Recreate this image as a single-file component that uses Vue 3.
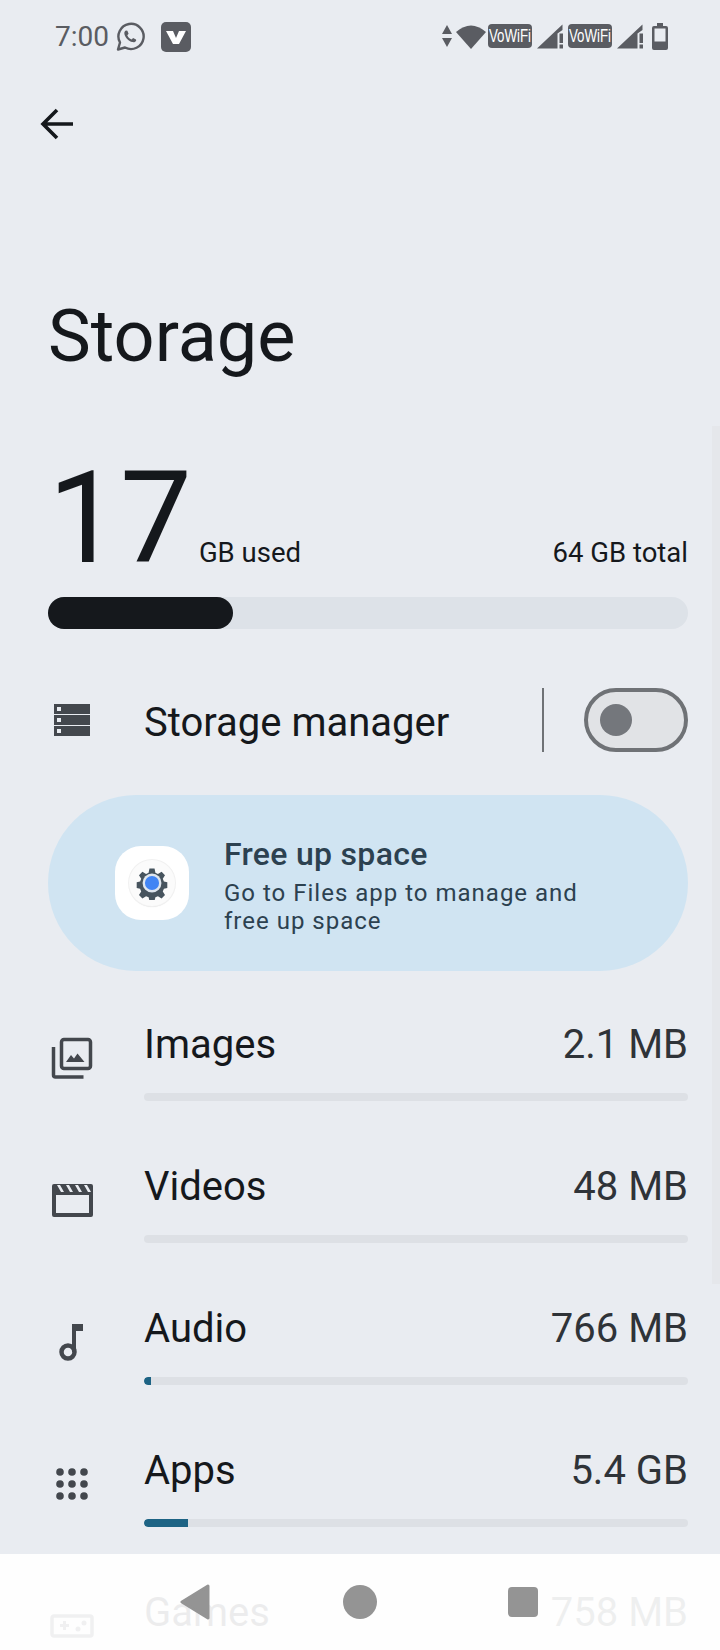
<script setup>
const rows = [
  { name: 'Images', size: '2.1 MB', pct: 0 },
  { name: 'Videos', size: '48 MB', pct: 0 },
  { name: 'Audio', size: '766 MB', pct: 1.2 },
  { name: 'Apps', size: '5.4 GB', pct: 8 },
  { name: 'Games', size: '758 MB', pct: 0 }
]
</script>

<template>
  <div class="phone">
    <div class="status">
      <div class="status-left">
        <span class="time">7:00</span>
        <svg class="wa" width="30" height="30" viewBox="0 0 30 30">
          <path d="M3 27.5l2-7A12.6 12.6 0 1 1 10 25.5z" fill="none" stroke="#5a5c62" stroke-width="2.4" stroke-linejoin="round"/>
          <path d="M11 8.6c-1.4.6-2 2-1.5 3.8 1 3.400 4.300 6.700 7.800 7.700 1.900.5 3.300-.2 3.900-1.700l-.2-1-2.900-1.400-1.500 1.500c-1.900-.7-3.500-2.300-4.300-4.300l1.300-1.400-1.200-3z" fill="#5a5c62"/>
        </svg>
        <svg class="vv" width="30" height="30" viewBox="0 0 30 30">
          <rect width="30" height="30" rx="5" fill="#5a5c62"/>
          <path d="M5 9h7l3 7 3-7h7l-7 13h-6z" fill="#fff"/>
        </svg>
      </div>
      <div class="status-right">
        <svg class="arrows" width="10" height="22" viewBox="0 0 10 22">
          <path d="M5 0l5 9H0zM5 22L0 13h10z" fill="#5a5c62"/>
        </svg>
        <svg class="wifi" width="30" height="25" viewBox="0 0 30 25">
          <path d="M0 8Q15-5 30 8L15 25z" fill="#5a5c62"/>
        </svg>
        <span class="vowifi"><span class="vowifi-text">VoWiFi</span></span>
        <svg class="signal" width="26" height="25" viewBox="0 0 26 25">
          <path d="M0 24.500L18 7.500v17z" fill="#5a5c62"/>
          <path d="M18 7.500L25.500 .5v5.500l-5 3.500v15h-2.500z" fill="#5a5c62"/>
          <path d="M22.500 9.500h3.500v9.500h-3.500zM22.500 20.500h3.500v4h-3.500z" fill="#5a5c62"/>
        </svg>
        <span class="vowifi"><span class="vowifi-text">VoWiFi</span></span>
        <svg class="signal" width="26" height="25" viewBox="0 0 26 25">
          <path d="M0 24.500L18 7.500v17z" fill="#5a5c62"/>
          <path d="M18 7.500L25.500 .5v5.500l-5 3.500v15h-2.500z" fill="#5a5c62"/>
          <path d="M22.500 9.500h3.500v9.500h-3.500zM22.500 20.500h3.500v4h-3.500z" fill="#5a5c62"/>
        </svg>
        <svg class="batt" width="16" height="27" viewBox="0 0 16 27">
          <path d="M5 0h6v3h3a2 2 0 0 1 2 2v20a2 2 0 0 1-2 2H2a2 2 0 0 1-2-2V5a2 2 0 0 1 2-2h3z" fill="#5a5c62"/>
          <rect x="2.500" y="5.500" width="11" height="13" fill="#e9ecf1"/>
        </svg>
      </div>
    </div>

    <svg class="back" width="34" height="32" viewBox="0 0 34 32">
      <path d="M33 16H3M17 2L3 16l14 14" fill="none" stroke="#15181c" stroke-width="3.600"/>
    </svg>

    <h1 class="title">Storage</h1>

    <div class="used-line">
      <span class="big">17</span>
      <span class="small used-unit">GB used</span>
      <span class="small total">64 GB total</span>
    </div>
    <div class="main-bar"><div class="main-fill"></div></div>

    <div class="manager">
      <svg class="row-icon" width="36" height="32" viewBox="0 0 36 32">
        <path fill-rule="evenodd" d="M0 0h36v10H0zM3 3v4h4V3zM0 11h36v10H0zM3 14v4h4v-4zM0 22h36v10H0zM3 25v4h4v-4z" fill="#43474d"/>
      </svg>
      <span class="manager-label">Storage manager</span>
      <span class="divider"></span>
      <div class="switch"><span class="knob"></span></div>
    </div>

    <div class="card">
      <div class="tile">
        <div class="tile-disc">
          <svg width="34" height="34" viewBox="0 0 36 36">
            <path d="M15 1h6l1 5 3 1.300 4.300-2.600 4 4.200-2.600 4.200 1.300 3 4 1v6.800l-4 1-1.300 3 2.600 4.200-4 4-4.300-2.500-3 1.300-1 4.100h-6l-1-4.100-3-1.300-4.300 2.500-4-4 2.600-4.200-1.300-3-4-1v-6.800l4-1 1.300-3-2.600-4.200 4-4.200L11 7.300l3-1.300z" fill="#47545e" transform="translate(1.800 1.800) scale(.9)"/>
            <circle cx="18" cy="18" r="10" fill="#dfe6ee"/>
            <circle cx="18" cy="18" r="7.500" fill="#4285f4"/>
          </svg>
        </div>
      </div>
      <div class="card-text">
        <div class="card-title">Free up space</div>
        <div class="card-sub">Go to Files app to manage and<br>free up space</div>
      </div>
    </div>

    <div class="list">
      <div v-for="r in rows" :key="r.name" class="row">
        <div class="icon-cell">
          <svg v-if="r.name === 'Images'" width="42" height="42" viewBox="0 0 42 42">
            <rect x="10.500" y="2.500" width="29" height="29" rx="2.500" fill="none" stroke="#43474d" stroke-width="3.500"/>
            <path d="M15 25l5-7 3 3.500 3.500-5 7 8.500z" fill="#43474d"/>
            <path d="M2.500 10v28a2 2 0 0 0 2 2h28" fill="none" stroke="#43474d" stroke-width="3.500"/>
          </svg>
          <svg v-else-if="r.name === 'Videos'" width="41" height="33" viewBox="0 0 41 33">
            <path fill-rule="evenodd" d="M2 0h37a2 2 0 0 1 2 2v29a2 2 0 0 1-2 2H2a2 2 0 0 1-2-2V2a2 2 0 0 1 2-2zM4 11v18h33V11zM5 1l4 7h3L8 1zM14 1l4 7h3l-4-7zM23 1l4 7h3l-4-7zM32 1l4 7h3l-4-7z" fill="#43474d"/>
          </svg>
          <svg v-else-if="r.name === 'Audio'" width="26" height="38" viewBox="0 0 26 38">
            <path d="M13 29V1h11v7h-7v21" fill="#43474d"/>
            <circle cx="9" cy="29" r="6.500" fill="none" stroke="#43474d" stroke-width="4.500"/>
          </svg>
          <svg v-else-if="r.name === 'Apps'" width="32" height="32" viewBox="0 0 32 32">
            <g fill="#43474d">
              <circle cx="4" cy="4" r="3.800"/><circle cx="16" cy="4" r="3.800"/><circle cx="28" cy="4" r="3.800"/>
              <circle cx="4" cy="16" r="3.800"/><circle cx="16" cy="16" r="3.800"/><circle cx="28" cy="16" r="3.800"/>
              <circle cx="4" cy="28" r="3.800"/><circle cx="16" cy="28" r="3.800"/><circle cx="28" cy="28" r="3.800"/>
            </g>
          </svg>
          <svg v-else width="44" height="24" viewBox="0 0 44 24">
            <rect x="2" y="2" width="40" height="20" rx="2" fill="none" stroke="#43474d" stroke-width="3.500"/>
            <path d="M10 10h3V7h3v3h3v3h-3v3h-3v-3h-3z" fill="#43474d"/>
            <circle cx="28" cy="15" r="2.500" fill="#43474d"/>
            <circle cx="34" cy="9" r="2.500" fill="#43474d"/>
          </svg>
        </div>
        <div class="row-body">
          <div class="row-head">
            <span class="row-name">{{ r.name }}</span>
            <span class="row-size">{{ r.size }}</span>
          </div>
          <div class="row-bar">
            <div v-if="r.pct" class="row-fill" :style="{ width: r.pct + '%' }"></div>
          </div>
        </div>
      </div>
    </div>

    <div class="scroll-thumb"></div>

    <div class="nav">
      <svg class="nav-back" width="32" height="36" viewBox="0 0 32 36">
        <path d="M29 2L3 18l26 16z" fill="#949494" stroke="#949494" stroke-width="3" stroke-linejoin="round"/>
      </svg>
      <span class="nav-home"></span>
      <span class="nav-recent"></span>
    </div>
  </div>
</template>

<style scoped>
.phone {
  position: relative;
  width: 720px;
  height: 1650px;
  overflow: hidden;
  background: #e9ecf1;
  font-family: Roboto, "Noto Sans", sans-serif;
  color: #15181c;
}
.status {
  display: flex;
  justify-content: space-between;
  align-items: center;
  height: 30px;
  padding: 22px 52px 0 55px;
}
.status-left {
  display: flex;
  align-items: center;
}
.time {
  font-size: 28px;
  color: #5a5c62;
  line-height: 30px;
}
.wa {
  margin-left: 6px;
}
.vv {
  margin-left: 16px;
}
.status-right {
  display: flex;
  align-items: center;
  gap: 5px;
  margin-top: -2px;
}
.vowifi {
  position: relative;
  display: block;
  width: 44px;
  height: 24px;
  line-height: 24px;
  border-radius: 4px;
  background: #5a5c62;
  color: #fff;
}
.vowifi-text {
  position: absolute;
  left: 50%;
  top: 0;
  font-family: "Liberation Sans", sans-serif;
  font-size: 19px;
  white-space: nowrap;
  transform: translateX(-50%) scaleX(0.7);
}
.arrows {
  margin-right: -1px;
}
.wifi {
  margin-right: -3px;
}
.batt {
  margin-left: 4px;
}
.back {
  display: block;
  margin: 56px 0 0 40px;
}
.title {
  margin: 157px 0 0 48px;
  font-size: 72px;
  line-height: 80px;
  font-weight: 400;
}
.used-line {
  display: flex;
  align-items: baseline;
  margin-top: 66px;
  padding: 0 32px 0 48px;
  height: 154px;
}
.big {
  font-size: 128px;
  line-height: 150px;
}
.small {
  font-size: 27.5px;
  color: #15181c;
}
.used-unit {
  margin-left: 7px;
}
.total {
  margin-left: auto;
}
.main-bar {
  margin: 0 32px 0 48px;
  height: 32px;
  border-radius: 16px;
  background: #dde2e8;
}
.main-fill {
  width: 185px;
  height: 100%;
  border-radius: 16px;
  background: #15181c;
}
.manager {
  display: flex;
  align-items: center;
  margin-top: 59px;
  height: 64px;
  padding: 0 32px 0 54px;
}
.manager-label {
  margin-left: 54px;
  padding-top: 4px;
  font-size: 40px;
  flex: 1;
}
.divider {
  width: 2px;
  height: 64px;
  background: #6f7276;
}
.switch {
  display: flex;
  align-items: center;
  box-sizing: border-box;
  width: 104px;
  height: 64px;
  margin-left: 40px;
  padding-left: 12px;
  border: 4px solid #6f7276;
  border-radius: 32px;
  background: #e1e3e6;
}
.knob {
  width: 32px;
  height: 32px;
  border-radius: 50%;
  background: #74777c;
}
.card {
  display: flex;
  align-items: center;
  box-sizing: border-box;
  height: 176px;
  margin: 43px 32px 0 48px;
  padding-left: 67px;
  border-radius: 88px;
  background: #d0e4f2;
  color: #2c4150;
}
.tile {
  display: flex;
  align-items: center;
  justify-content: center;
  width: 74px;
  height: 74px;
  border-radius: 26px;
  background: #fff;
}
.tile-disc {
  display: flex;
  align-items: center;
  justify-content: center;
  width: 46px;
  height: 46px;
  border-radius: 50%;
  background: #fbfbfb;
  box-shadow: 0 0 0 1px #f1f1f1, 0 1px 1px #dcdcdc;
}
.card-text {
  margin-left: 35px;
  padding-top: 4px;
}
.card-title {
  font-size: 32px;
  font-weight: 500;
  line-height: 36px;
  letter-spacing: 0.3px;
}
.card-sub {
  margin-top: 7px;
  font-size: 24px;
  line-height: 28px;
  letter-spacing: 1px;
}
.list {
  margin-top: 32px;
  padding: 0 32px 0 0;
}
.row {
  display: flex;
  height: 142px;
}
.icon-cell {
  display: flex;
  justify-content: center;
  align-items: center;
  width: 144px;
  height: 110px;
  box-sizing: border-box;
}
.row-body {
  flex: 1;
}
.row-head {
  display: flex;
  justify-content: space-between;
  align-items: baseline;
  font-size: 40px;
  line-height: 44px;
  padding-top: 20px;
}
.row-size {
  color: #2f3338;
}
.row-bar {
  margin-top: 26px;
  height: 8px;
  border-radius: 4px;
  background: #dde0e5;
  overflow: hidden;
}
.row-fill {
  height: 100%;
  border-radius: 4px 0 0 4px;
  background: #1d6384;
}
.scroll-thumb {
  position: absolute;
  top: 426px;
  right: 0;
  width: 8px;
  height: 858px;
  background: #e5e7eb;
}
.nav {
  position: absolute;
  left: 0;
  right: 0;
  top: 1554px;
  height: 96px;
  background: rgba(255, 255, 255, 0.92);
}
.nav-back {
  position: absolute;
  left: 179px;
  top: 30px;
}
.nav-home {
  position: absolute;
  left: 343px;
  top: 31px;
  width: 34px;
  height: 34px;
  border-radius: 50%;
  background: #949494;
}
.nav-recent {
  position: absolute;
  left: 508px;
  top: 33px;
  width: 30px;
  height: 30px;
  border-radius: 4px;
  background: #949494;
}
</style>

<style>
body {
  background: #e9ecf1;
}
</style>
